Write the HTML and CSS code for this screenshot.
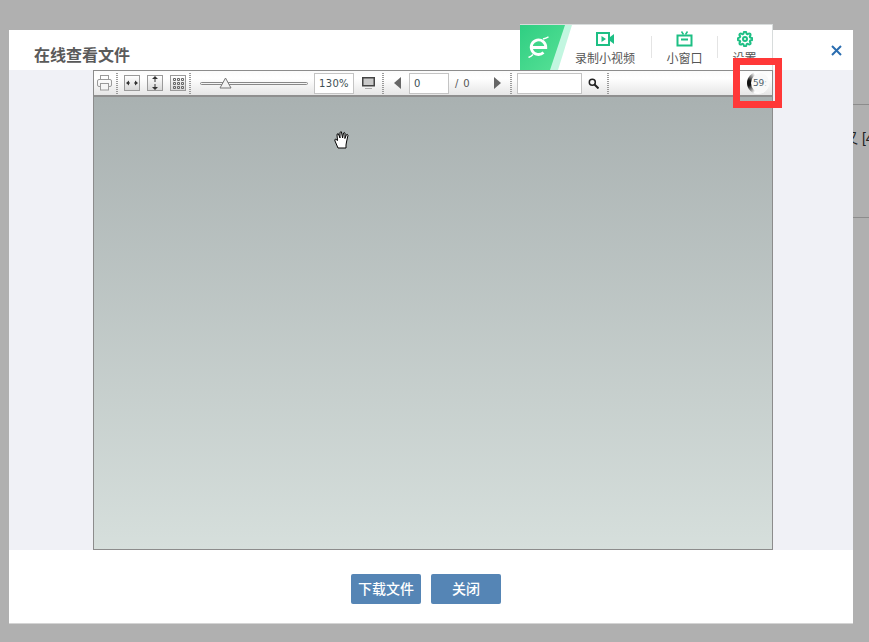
FILE: index.html
```html
<!DOCTYPE html>
<html lang="zh">
<head>
<meta charset="utf-8">
<title>在线查看文件</title>
<link rel="stylesheet" href="styles.css">
</head>
<body>
<div class="backdrop-line line-a"></div>
<div class="backdrop-text">又 [4</div>
<div class="backdrop-line line-b"></div>
<div class="modal">
  <header class="modal-head">
    <h1 class="modal-title">在线查看文件</h1>
    <svg class="close" width="11" height="11" viewBox="0 0 11 11"><path d="M1 1l9 9M10 1l-9 9" stroke="#2a6db0" stroke-width="2"/></svg>
  </header>
  <div class="modal-body">
    <div class="viewer">
      <div class="toolbar">
        <svg class="ic ic-print" width="15" height="16" viewBox="0 0 15 16" fill="none" stroke="#9a9a9a"><rect x="3.500" y=".5" width="8" height="4"/><rect x=".5" y="4.500" width="14" height="7" rx="1.500"/><rect x="3.500" y="8.500" width="8" height="6.500" fill="#f6f6f6"/></svg>
        <span class="sep sep-a"></span>
        <span class="tbtn tbtn-a"><svg width="14" height="14" viewBox="0 0 14 14"><path d="M1 7l3-2.500v5zM13 7l-3-2.500v5z" fill="#333"/><path d="M4 7h1M9 7h1" stroke="#333"/></svg></span>
        <span class="tbtn tbtn-b"><svg width="14" height="14" viewBox="0 0 14 14"><path d="M7 0l-3 3h6zM7 14l-3-3h6z" fill="#333"/><path d="M7 3v3M7 8v3" stroke="#333"/></svg></span>
        <span class="tbtn tbtn-c"><svg width="11" height="11" viewBox="0 0 11 11" fill="none" stroke="#666"><path d="M.5.500h2v2h-2zM4.500.500h2v2h-2zM8.500.500h2v2h-2zM.5 4.500h2v2h-2zM4.500 4.500h2v2h-2zM8.500 4.500h2v2h-2zM.5 8.500h2v2h-2zM4.500 8.500h2v2h-2zM8.500 8.500h2v2h-2z"/></svg></span>
        <span class="sep sep-b"></span>
        <div class="slider"><svg class="knob" width="13" height="12" viewBox="0 0 13 12"><path d="M6.500 1L12 11H1z" fill="#f2f2f2" stroke="#777"/></svg></div>
        <span class="field field-zoom">130%</span>
        <svg class="ic ic-screen" width="13" height="12" viewBox="0 0 13 12"><path d="M.75.750h11.500v8H.75z" fill="#c9c9c9" stroke="#444" stroke-width="1.500"/><path d="M3 11.500h7" stroke="#aaa"/></svg>
        <span class="sep sep-c"></span>
        <svg class="ic ic-prev" width="7" height="12" viewBox="0 0 7 12"><path d="M7 0v12L0 6z" fill="#666"/></svg>
        <span class="field field-page">0</span>
        <span class="page-total">/ 0</span>
        <svg class="ic ic-next" width="7" height="12" viewBox="0 0 7 12"><path d="M0 0v12l7-6z" fill="#666"/></svg>
        <span class="sep sep-d"></span>
        <span class="field field-search"></span>
        <svg class="ic ic-find" width="11" height="11" viewBox="0 0 11 11" fill="none" stroke="#222"><circle cx="4.300" cy="4.300" r="3" stroke-width="1.500"/><path d="M6.500 6.500L10.500 10.500" stroke-width="2"/></svg>
        <span class="sep sep-e"></span>
        <div class="spinner"><div class="spinner-face"><span class="spinner-text">59<span class="spinner-fade">:</span></span></div></div>
      </div>
      <div class="canvas"></div>
    </div>
  </div>
  <footer class="modal-foot">
    <button class="btn" type="button">下载文件</button>
    <button class="btn" type="button">关闭</button>
  </footer>
</div>
<svg class="hand" width="16" height="18" viewBox="0 0 16 18"><path d="M4 17L1 10q-.8-1.800.8-1.800L3.500 9.500 3 4q0-1.500 1.300-1.300L6 7 6 1.800q.2-1.300 1.400-1L8.600 7 9.500 2q.8-1 1.500 0L10.900 7.500l1.500-3.800q1.200-.8 1.600.5L12.500 11l-.5 3v3z" fill="#fff" stroke="#000"/></svg>
<div class="recorder">
  <div class="rec-logo">
    <div class="rec-logo-fill"></div>
    <svg class="rec-e" width="21" height="22" viewBox="0 0 21 22" fill="none" stroke="#fff"><path d="M3.500 11.500H17.800A7.300 7.300 0 1 0 15.500 16.500" stroke-width="2.800"/><path d="M.5 21.500Q3 20.500 5 18.500M15 3Q18 2 20.500.8" stroke-width="1.400"/></svg>
  </div>
  <div class="rec-items">
    <div class="rec-item rec-video">
      <svg width="18" height="14" viewBox="0 0 18 14"><rect x="1" y="1" width="12" height="12" fill="none" stroke="#1dbf84" stroke-width="2"/><path d="M5.500 4v6l4.500-3zM14 5l4-3v10l-4-3z" fill="#1dbf84"/></svg>
      <span class="rec-label">录制小视频</span>
    </div>
    <div class="rec-item rec-mini">
      <svg width="17" height="16" viewBox="0 0 17 16" fill="none" stroke="#1dbf84" stroke-width="2"><rect x="1.500" y="4.500" width="14" height="10"/><path d="M5 8.500h7"/><path d="M5.500 .5l2 3M11.500 .5l-2 3" stroke-width="1.500"/></svg>
      <span class="rec-label">小窗口</span>
    </div>
    <div class="rec-item rec-set">
      <svg width="16" height="16" viewBox="0 0 24 24" fill="none" stroke="#1dbf84" stroke-width="3"><circle cx="12" cy="12" r="3"/><path d="M19.400 15a1.650 1.650 0 0 0 .33 1.820l.06.06a2 2 0 0 1 0 2.830 2 2 0 0 1-2.830 0l-.06-.06a1.650 1.650 0 0 0-1.820-.33 1.650 1.650 0 0 0-1 1.510V21a2 2 0 0 1-2 2 2 2 0 0 1-2-2v-.09A1.650 1.650 0 0 0 9 19.400a1.650 1.650 0 0 0-1.820.33l-.06.06a2 2 0 0 1-2.830 0 2 2 0 0 1 0-2.830l.06-.06a1.650 1.650 0 0 0 .33-1.820 1.650 1.650 0 0 0-1.510-1H3a2 2 0 0 1-2-2 2 2 0 0 1 2-2h.09A1.650 1.650 0 0 0 4.600 9a1.650 1.650 0 0 0-.33-1.820l-.06-.06a2 2 0 0 1 0-2.830 2 2 0 0 1 2.830 0l.06.06a1.650 1.650 0 0 0 1.820.33H9a1.650 1.650 0 0 0 1-1.510V3a2 2 0 0 1 2-2 2 2 0 0 1 2 2v.09a1.650 1.650 0 0 0 1 1.510 1.650 1.650 0 0 0 1.820-.33l.06-.06a2 2 0 0 1 2.830 0 2 2 0 0 1 0 2.830l-.06.06a1.650 1.650 0 0 0-.33 1.820V9a1.650 1.650 0 0 0 1.510 1H21a2 2 0 0 1 2 2 2 2 0 0 1-2 2h-.09a1.650 1.650 0 0 0-1.510 1z"/></svg>
      <span class="rec-label">设置</span>
    </div>
  </div>
</div>
<div class="marker"></div>
</body>
</html>
```
FILE: styles.css
```css
* { box-sizing: border-box; }
html, body { margin: 0; padding: 0; }
body {
  width: 869px;
  height: 642px;
  overflow: hidden;
  position: relative;
  background: #b0b0b0;
  font-family: "Liberation Sans", "Noto Sans CJK SC", sans-serif;
  padding: 30px 0 0 9px;
}
.backdrop-line { position: absolute; left: 853px; width: 16px; height: 1px; background: #8c8c8c; }
.line-a { top: 104px; }
.line-b { top: 217px; }
.backdrop-text {
  position: absolute; left: 853px; top: 129px; width: 16px; overflow: hidden;
  font-size: 14px; line-height: 18px; color: #222; white-space: nowrap; text-indent: -9px;
}
.modal {
  width: 844px;
  height: 594px;
  display: flex;
  flex-direction: column;
  background: #fff;
  border-bottom: 1px solid #d4d4d4;
}
.modal-head {
  height: 40px;
  flex: none;
  display: flex;
  align-items: flex-start;
  justify-content: space-between;
  padding: 16px 11px 0 25px;
}
.modal-title { margin: 0; font-size: 16px; line-height: 20px; font-weight: 700; color: #5a5a5a; }
.close { margin-top: -1px; }
.modal-body {
  height: 480px;
  flex: none;
  background: #f0f1f6;
  padding-left: 84px;
}
.viewer {
  width: 680px;
  height: 480px;
  display: flex;
  flex-direction: column;
  border: 1px solid #8c8c8c;
}
.toolbar {
  height: 26px;
  flex: none;
  display: flex;
  align-items: center;
  background: linear-gradient(#fbfbfb, #ffffff 30%, #e6e6e6);
  border-bottom: 2px solid #8f8f8f;
  padding-left: 3px;
}
.ic { flex: none; display: block; }
.sep {
  flex: none;
  width: 2px;
  height: 21px;
  background-image: linear-gradient(#9a9a9a 50%, transparent 50%);
  background-size: 2px 2px;
}
.sep-a { margin-left: 4px; }
.tbtn {
  flex: none;
  width: 16px;
  height: 16px;
  display: flex;
  align-items: center;
  justify-content: center;
  border: 1px solid #9a9a9a;
  background: linear-gradient(#fff, #d8d8d8);
}
.tbtn-a { margin-left: 6px; }
.tbtn-b { margin-left: 7px; }
.tbtn-c { margin-left: 7px; }
.sep-b { margin-left: 3px; }
.slider {
  flex: none;
  position: relative;
  width: 108px;
  height: 3px;
  margin-left: 9px;
  border: 1px solid #888;
  border-radius: 2px;
  background: #f4f4f4;
}
.knob { position: absolute; left: 18px; top: -6px; }
.field {
  flex: none;
  height: 21px;
  border: 1px solid #c4c4c4;
  background: #fff;
  font-family: "DejaVu Sans", sans-serif;
  font-size: 10px;
  line-height: 19px;
  color: #3d4f55;
  letter-spacing: .3px;
}
.field-zoom { width: 40px; margin-left: 6px; text-align: center; }
.ic-screen { margin-left: 8px; }
.sep-c { margin-left: 7px; }
.ic-prev { margin-left: 10px; }
.field-page { width: 40px; margin-left: 8px; padding-left: 4px; }
.page-total {
  flex: none; width: 39px; padding-left: 6px;
  font-family: "DejaVu Sans", sans-serif; font-size: 10px; color: #555; letter-spacing: .8px;
}
.ic-next { margin-left: 6px; }
.sep-d { margin-left: 9px; }
.field-search { width: 65px; margin-left: 5px; }
.ic-find { margin-left: 6px; }
.sep-e { margin-left: 8px; }
.spinner {
  flex: none;
  position: relative;
  width: 22px;
  height: 22px;
  margin-left: 138px;
  border-radius: 50%;
  overflow: hidden;
  background: conic-gradient(from 200deg, rgba(255,255,255,.9) 0deg, #111 55deg, #111 85deg, rgba(255,255,255,.9) 140deg, rgba(255,255,255,.9) 360deg);
}
.spinner-face {
  position: absolute;
  left: 4px;
  top: 1px;
  width: 20px;
  height: 20px;
  border-radius: 50%;
  background: #f9f9f9;
  display: flex;
  align-items: center;
  padding-left: 2px;
}
.spinner-text { font-family: "DejaVu Sans", sans-serif; font-size: 9px; letter-spacing: -.2px; color: #4f5f69; white-space: nowrap; }
.spinner-fade { color: #c4c9cc; }
.canvas { flex: 1; background: linear-gradient(#a9b1b1, #d6dfdc); }
.modal-foot {
  flex: 1;
  display: flex;
  justify-content: center;
  gap: 10px;
  padding: 24px 10px 0 0;
}
.btn {
  width: 70px;
  height: 30px;
  padding: 0 0 2px;
  border: 0;
  border-radius: 2px;
  background: #5585b5;
  color: #fff;
  font-family: inherit;
  font-size: 14px;
  font-weight: 500;
}
.hand { position: absolute; left: 334px; top: 131px; }
.recorder {
  position: absolute;
  left: 520px;
  top: 24px;
  width: 253px;
  height: 46px;
  display: flex;
  background: #fff;
  border: solid #d8dcdc;
  border-width: 1px 1px 0 0;
}
.rec-logo {
  position: relative;
  flex: none;
  width: 52px;
  height: 45px;
  background: #c2f6e0;
  clip-path: polygon(0 0, 100% 0, 38px 100%, 0 100%);
}
.rec-logo-fill {
  position: absolute;
  inset: 0;
  background: linear-gradient(135deg, #2fce82, #5be398);
  clip-path: polygon(0 0, 45px 0, 30px 100%, 0 100%);
}
.rec-e { position: absolute; left: 8px; top: 11px; }
.rec-items { flex: 1; display: flex; margin-left: -14px; position: relative; }
.rec-item {
  position: relative;
  display: flex;
  flex-direction: column;
  align-items: center;
  padding-top: 6px;
  gap: 4px;
  flex: none;
}
.rec-item svg { height: 16px; flex: none; }
.rec-video { width: 93px; padding-left: 1px; }
.rec-mini { width: 66px; padding-left: 1px; }
.rec-set { width: 55px; }
.rec-mini::before, .rec-set::before {
  content: ""; position: absolute; left: 0; top: 11px; width: 1px; height: 22px; background: #e4e4e4;
}
.rec-label { font-size: 12px; line-height: 17px; color: #555; white-space: nowrap; }
.marker {
  position: absolute;
  left: 733px;
  top: 58px;
  width: 49px;
  height: 50px;
  border: 7px solid #ff3838;
}
```
